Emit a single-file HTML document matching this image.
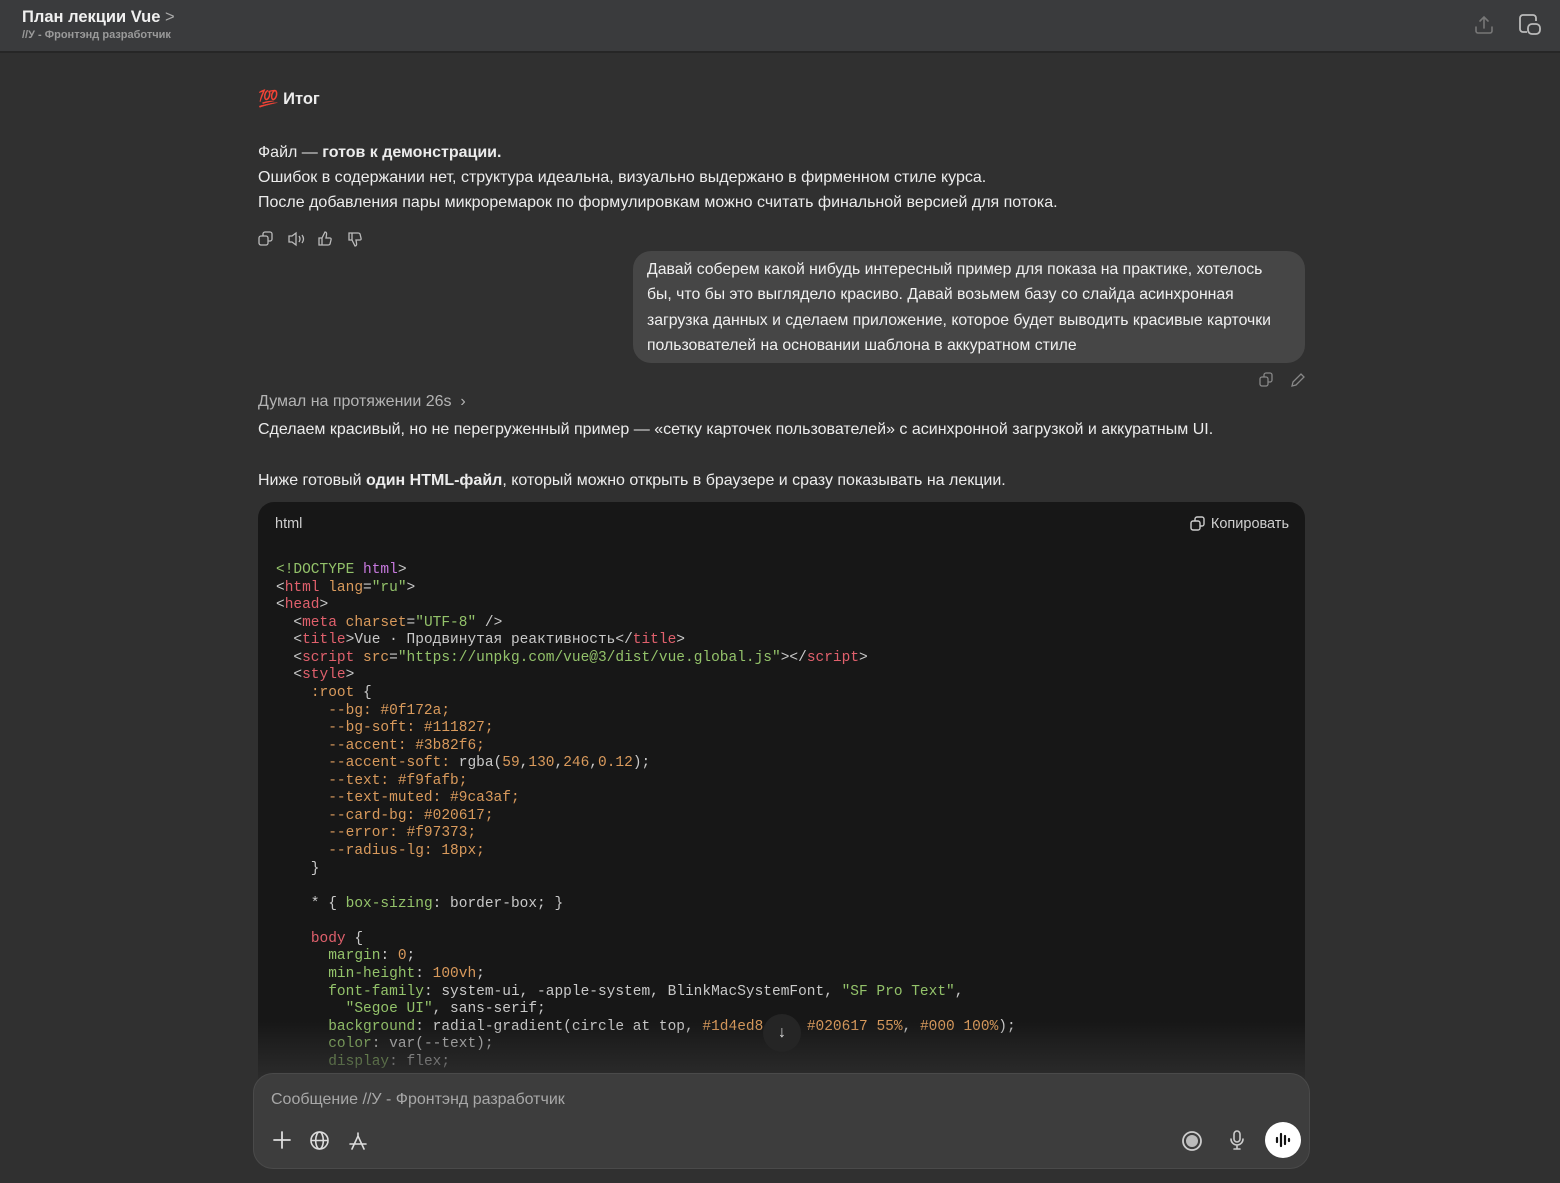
<!DOCTYPE html>
<html lang="ru"><head><meta charset="utf-8">
<style>
*{box-sizing:border-box;margin:0;padding:0}
body{width:1560px;height:1183px;background:#303030;font-family:"Liberation Sans",sans-serif;color:#ececec;position:relative;overflow:hidden}
.hdr{position:absolute;left:0;top:0;width:1560px;height:53px;background:#3a3b3d;border-bottom:2px solid #262626}
.t1{position:absolute;left:22px;top:8px;font-size:16.5px;font-weight:bold;color:#f0f0f0}
.t2{position:absolute;left:22px;top:29px;font-size:11px;color:#9a9a9a;font-weight:bold}
.abs{position:absolute}
.p{position:absolute;left:258px;font-size:16px;color:#ececec;white-space:nowrap}
.bub{position:absolute;left:633px;top:251px;width:672px;height:112px;background:#464646;border-radius:18px;padding:6px 14px;font-size:15.8px;line-height:25.3px;color:#f0f0f0}
.code{position:absolute;left:258px;top:502px;width:1047px;height:600px;background:#171717;border-radius:16px;overflow:hidden}
.code .lang{position:absolute;left:17px;top:14px;font-size:14.5px;color:#cfcfcf}
.code .cp{position:absolute;right:16px;top:14px;font-size:14.5px;color:#cfcfcf}
pre{position:absolute;left:18px;top:60px;font-family:"Liberation Mono",monospace;font-size:14.5px;line-height:17.57px;color:#c9c9c9}
.r{color:#e0606c}.o{color:#d99a5c}.g{color:#93c26a}.m{color:#c678dd}
.fade{position:absolute;left:0;top:520px;width:100%;height:80px;background:linear-gradient(rgba(48,48,48,0),#303030 85%)}
.inp{position:absolute;left:253px;top:1073px;width:1057px;height:96px;background:#3d3d3d;border:1px solid #4a4a4a;border-radius:20px}
svg{position:absolute}
</style></head><body>
<div class="hdr">
<div class="t1">План лекции Vue <span style="font-weight:normal;color:#aaa">&gt;</span></div>
<div class="t2">//У - Фронтэнд разработчик</div>
<svg style="left:1472px;top:13px" width="24" height="24" viewBox="0 0 24 24" fill="none" stroke="#777" stroke-width="1.6" stroke-linecap="round"><path d="M12 15V4M8 8l4-4 4 4M4 14v4a2 2 0 0 0 2 2h12a2 2 0 0 0 2-2v-4"/></svg>
<svg style="left:1517px;top:12px" width="26" height="26" viewBox="0 0 26 26" fill="none" stroke="#bbb" stroke-width="1.8"><path d="M10 20H6a3 3 0 0 1-3-3V6a3 3 0 0 1 3-3h10a3 3 0 0 1 3 3v3"/><rect x="11" y="12" width="12" height="10" rx="4"/></svg>
</div>
<div class="p" style="top:90px;font-size:16.5px;font-weight:bold"><span style="color:#d22">💯</span> Итог</div>
<div class="p" style="top:144px">Файл — <b>готов к демонстрации.</b></div>
<div class="p" style="top:169px">Ошибок в содержании нет, структура идеальна, визуально выдержано в фирменном стиле курса.</div>
<div class="p" style="top:194px">После добавления пары микроремарок по формулировкам можно считать финальной версией для потока.</div>
<svg style="left:258px;top:231px" width="110" height="16" viewBox="0 0 110 16" fill="none" stroke="#bbb" stroke-width="1.3"><rect x="1" y="5" width="9" height="9" rx="2"/><path d="M5 5V3a2 2 0 0 1 2-2h5a2 2 0 0 1 2 2v5a2 2 0 0 1-2 2h-2"/><path d="M31 5h3l4-3v12l-4-3h-3zM41 5q2 3 0 6M44 4q3 4 0 8"/><path d="M61 7h3v7h-3zM64 7l3-6q2 0 1.5 3l-.5 3h4q1.5 0 1 2l-1 4q-.5 1-2 1H64"/><path d="M91 9h3V2h-3zM94 9l3 6q2 0 1.5-3L98 9h4q1.5 0 1-2l-1-4q-.5-1-2-1h-6"/></svg>
<div class="bub">Давай соберем какой нибудь интересный пример для показа на практике, хотелось бы, что бы это выглядело красиво. Давай возьмем базу со слайда асинхронная загрузка данных и сделаем приложение, которое будет выводить красивые карточки пользователей на основании шаблона в аккуратном стиле</div>
<svg style="left:1259px;top:372px" width="50" height="16" viewBox="0 0 50 16" fill="none" stroke="#888" stroke-width="1.3"><rect x="1" y="5" width="8" height="9" rx="2"/><path d="M5 5V3a2 2 0 0 1 2-2h4a2 2 0 0 1 2 2v5a2 2 0 0 1-2 2h-2"/><path d="M33 14l1-4 8-8 3 3-8 8z"/></svg>
<div class="p" style="top:393px;color:#b4b4b4">Думал на протяжении 26s &nbsp;›</div>
<div class="p" style="top:421px">Сделаем красивый, но не перегруженный пример — «сетку карточек пользователей» с асинхронной загрузкой и аккуратным UI.</div>
<div class="p" style="top:472px">Ниже готовый <b>один HTML-файл</b>, который можно открыть в браузере и сразу показывать на лекции.</div>
<div class="code">
<div class="lang">html</div>
<div class="cp"><svg style="position:relative;display:inline-block;vertical-align:-3px;margin-right:6px" width="15" height="15" viewBox="0 0 15 15" fill="none" stroke="#ccc" stroke-width="1.4"><rect x="1" y="5" width="9" height="9" rx="2"/><path d="M5 5V3a2 2 0 0 1 2-2h5a2 2 0 0 1 2 2v5a2 2 0 0 1-2 2h-2"/></svg>Копировать</div>
<pre><span class="g">&lt;!DOCTYPE</span> <span class="m">html</span>&gt;
&lt;<span class="r">html</span> <span class="o">lang</span>=<span class="g">"ru"</span>&gt;
&lt;<span class="r">head</span>&gt;
  &lt;<span class="r">meta</span> <span class="o">charset</span>=<span class="g">"UTF-8"</span> /&gt;
  &lt;<span class="r">title</span>&gt;Vue · Продвинутая реактивность&lt;/<span class="r">title</span>&gt;
  &lt;<span class="r">script</span> <span class="o">src</span>=<span class="g">"https://unpkg.com/vue@3/dist/vue.global.js"</span>&gt;&lt;/<span class="r">script</span>&gt;
  &lt;<span class="r">style</span>&gt;
    <span class="o">:root</span> {
      <span class="o">--bg: #0f172a;</span>
      <span class="o">--bg-soft: #111827;</span>
      <span class="o">--accent: #3b82f6;</span>
      <span class="o">--accent-soft:</span> rgba(<span class="o">59</span>,<span class="o">130</span>,<span class="o">246</span>,<span class="o">0.12</span>);
      <span class="o">--text: #f9fafb;</span>
      <span class="o">--text-muted: #9ca3af;</span>
      <span class="o">--card-bg: #020617;</span>
      <span class="o">--error: #f97373;</span>
      <span class="o">--radius-lg: 18px;</span>
    }

    * { <span class="g">box-sizing</span>: border-box; }

    <span class="r">body</span> {
      <span class="g">margin</span>: <span class="o">0</span>;
      <span class="g">min-height</span>: <span class="o">100vh</span>;
      <span class="g">font-family</span>: system-ui, -apple-system, BlinkMacSystemFont, <span class="g">"SF Pro Text"</span>,
        <span class="g">"Segoe UI"</span>, sans-serif;
      <span class="g">background</span>: radial-gradient(circle at top, <span class="o">#1d4ed8</span> <span class="o">0%</span>, <span class="o">#020617 55%</span>, <span class="o">#000 100%</span>);
      <span class="g">color</span>: var(--text);
      <span class="g">display</span>: flex;</pre>
<div class="fade"></div>
</div>
<div class="abs" style="left:763px;top:1014px;width:38px;height:38px;border-radius:50%;background:#252525;color:#ddd;font-size:16px;text-align:center;line-height:38px">↓</div>
<div class="inp">
<div class="abs" style="left:17px;top:17px;font-size:16px;color:#a8a8a8">Сообщение //У - Фронтэнд разработчик</div>
<svg style="left:18px;top:56px" width="20" height="20" viewBox="0 0 20 20" stroke="#ddd" stroke-width="1.8" stroke-linecap="round"><path d="M10 2v16M2 10h16"/></svg>
<svg style="left:55px;top:56px" width="21" height="21" viewBox="0 0 21 21" fill="none" stroke="#ddd" stroke-width="1.6"><circle cx="10.5" cy="10.5" r="8.5"/><ellipse cx="10.5" cy="10.5" rx="3.8" ry="8.5"/><path d="M2 10.5h17"/></svg>
<svg style="left:94px;top:57px" width="20" height="20" viewBox="0 0 20 20" fill="none" stroke="#ddd" stroke-width="1.6" stroke-linecap="round"><path d="M10 2v3M4 18L10 5l6 13M2 13h16"/></svg>
<svg style="left:927px;top:56px" width="22" height="22" viewBox="0 0 22 22"><circle cx="11" cy="11" r="9" fill="none" stroke="#ccc" stroke-width="1.8"/><circle cx="11" cy="11" r="6" fill="#bbb"/></svg>
<svg style="left:973px;top:55px" width="20" height="22" viewBox="0 0 20 22" fill="none" stroke="#ccc" stroke-width="1.6" stroke-linecap="round"><rect x="7" y="2" width="6" height="11" rx="3"/><path d="M4 10a6 6 0 0 0 12 0M10 16v4M7 20h6"/></svg>
<div class="abs" style="left:1011px;top:48px;width:36px;height:36px;border-radius:50%;background:#fff"></div>
<svg style="left:1017px;top:54px" width="24" height="24" viewBox="0 0 24 24" stroke="#111" stroke-width="2.2" stroke-linecap="round"><path d="M6 10v4M10 6v12M14 8v8M18 11v2"/></svg>
</div>
</body></html>
